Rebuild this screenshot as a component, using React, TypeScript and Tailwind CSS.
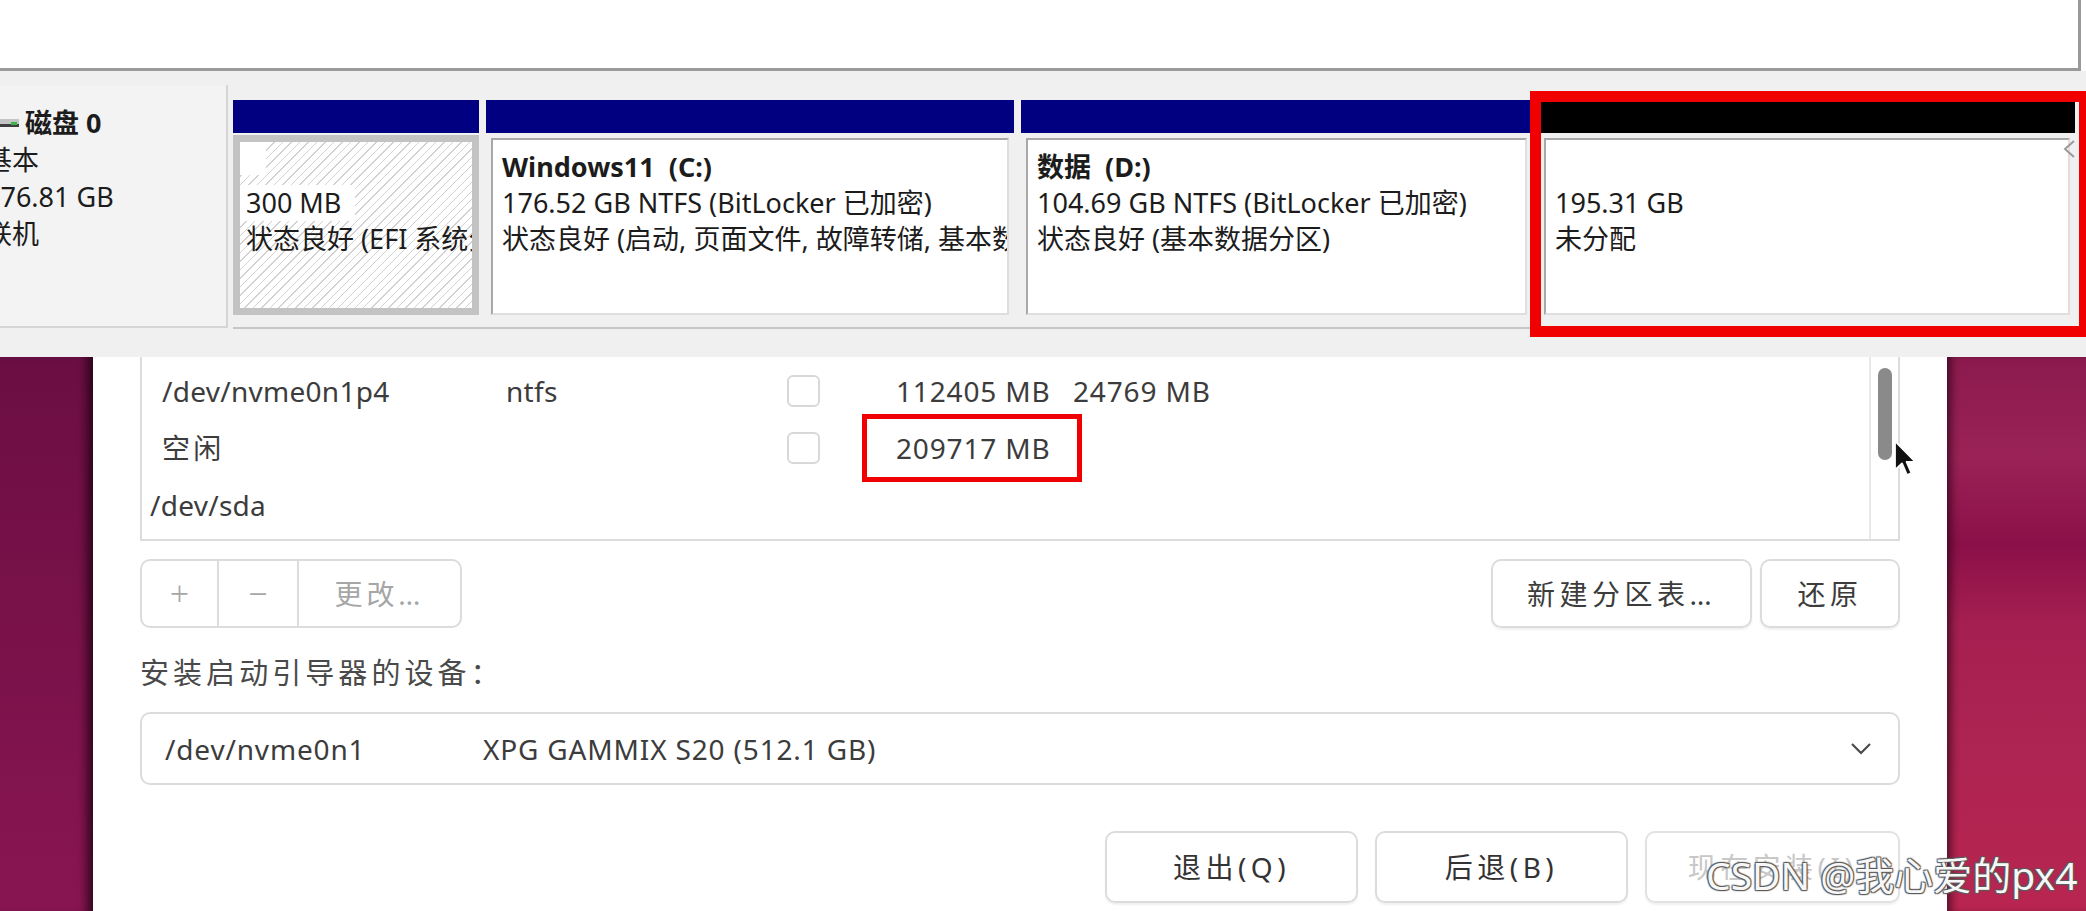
import React from 'react';

function DiskIcon() {
  return (
    <svg width="34" height="16" viewBox="0 0 34 16" className="shrink-0">
      <rect x="0" y="4" width="34" height="8" fill="#c4c4c4" />
      <rect x="0" y="9" width="34" height="3" fill="#3f3f3f" />
      <rect x="26" y="7" width="6" height="3" fill="#39b54a" />
    </svg>
  );
}

function PartitionBox({
  width,
  head,
  hatched,
  children,
}: {
  width: string;
  head: string;
  hatched?: boolean;
  children: React.ReactNode;
}) {
  return (
    <div className={`${width} flex flex-col`}>
      <div className={`h-[33px] ${head}`} />
      {hatched ? (
        <div className="mt-[2px] mb-[5px] flex-1 bg-[#c3c3c3] p-[7px]">
          <div className="h-full overflow-hidden whitespace-nowrap bg-[repeating-linear-gradient(135deg,#d2d2d2_0px,#d2d2d2_1px,#ffffff_1px,#ffffff_6px)]">
            {children}
          </div>
        </div>
      ) : (
        <div className="flex-1 p-[5px]">
          <div className="h-full overflow-hidden whitespace-nowrap border-2 border-t-[#a8a8a8] border-l-[#a8a8a8] border-r-[#dedede] border-b-[#dedede] bg-white pt-[9px] pl-[9px]">
            {children}
          </div>
        </div>
      )}
    </div>
  );
}

function DiskManagement() {
  return (
    <div className="relative h-[357px] overflow-hidden bg-[#f0f0f0] font-['Noto_Sans','Noto_Sans_CJK_SC',sans-serif] text-[27px] leading-[36px] text-[#1c1c1c]">
      <div className="h-[71px] bg-white">
        <div className="h-full w-[2081px] border-r-[3px] border-b-[3px] border-[#9a9a9a]" />
      </div>

      <div className="mt-[14px] flex items-start">
        {/* disk label */}
        <div className="h-[243px] w-[228px] overflow-hidden border-r-2 border-b-2 border-[#d5d5d5] bg-[#f3f3f3]">
          <div className="-ml-[15px] pt-[19px] leading-[37px] whitespace-nowrap">
            <div className="flex items-center gap-[6px] font-bold">
              <DiskIcon />
              <span>磁盘 0</span>
            </div>
            <div>基本</div>
            <div>176.81 GB</div>
            <div>联机</div>
          </div>
        </div>

        {/* partitions */}
        <div className="mt-[15px] ml-[5px] flex h-[229px] gap-[7px] border-b-2 border-[#c6c6c6] pb-[7px]">
          <PartitionBox width="w-[246px]" head="bg-[#000080]" hatched>
            <div className="h-[43px]">
              <span className="inline-block h-[33px] w-[26px] bg-white" />
            </div>
            <div>
              <span className="inline-block bg-white pr-[14px] pl-[6px]">300 MB</span>
            </div>
            <div className="pl-[6px]">状态良好 (EFI 系统分区)</div>
          </PartitionBox>

          <PartitionBox width="w-[528px]" head="bg-[#000080]">
            <div className="font-bold whitespace-pre">Windows11  (C:)</div>
            <div>176.52 GB NTFS (BitLocker 已加密)</div>
            <div>状态良好 (启动, 页面文件, 故障转储, 基本数据分区)</div>
          </PartitionBox>

          <PartitionBox width="w-[511px]" head="bg-[#000080]">
            <div className="font-bold whitespace-pre">数据  (D:)</div>
            <div>104.69 GB NTFS (BitLocker 已加密)</div>
            <div>状态良好 (基本数据分区)</div>
          </PartitionBox>

          <PartitionBox width="w-[536px]" head="bg-black">
            <div className="h-[36px]" />
            <div>195.31 GB</div>
            <div>未分配</div>
          </PartitionBox>
        </div>
      </div>

      {/* small chevron at right edge */}
      <svg className="absolute top-[140px] left-[2063px]" width="12" height="18" viewBox="0 0 12 18">
        <path d="M11 1 L2 9 L11 17" fill="none" stroke="#9a9a9a" strokeWidth="2" />
      </svg>

      {/* red annotation */}
      <div className="absolute top-[91px] left-[1530px] h-[246px] w-[560px] border-[11px] border-[#f00000]" />
    </div>
  );
}

function Checkbox() {
  return <div className="h-[32px] w-[33px] rounded-[6px] border-2 border-[#d8d8d8] bg-white" />;
}

const btn = 'flex items-center justify-center rounded-[10px] border-2 border-[#dcdcdc] tracking-[0.16em] shadow-[0_2px_2px_rgba(0,0,0,0.06)]';

function Installer() {
  return (
    <div className="relative w-[1854px] bg-white px-[47px] font-['Noto_Sans','Noto_Sans_CJK_SC',sans-serif] text-[28px] tracking-[0.01em] text-[#3c3c3c]">
      {/* partition list */}
      <div className="flex h-[184px] border-x-2 border-b-2 border-[#dcdcdc]">
        <div className="flex-1 pt-[5px]">
          <div className="flex h-[57px] items-center">
            <div className="w-[364px] pl-[20px]">/dev/nvme0n1p4</div>
            <div className="w-[281px]">ntfs</div>
            <div className="w-[109px]">
              <Checkbox />
            </div>
            <div className="w-[177px] tracking-[0.03em]">112405 MB</div>
            <div className="tracking-[0.03em]">24769 MB</div>
          </div>
          <div className="flex h-[57px] items-center">
            <div className="w-[364px] pl-[20px] tracking-[0.12em]">空闲</div>
            <div className="w-[281px]" />
            <div className="w-[109px]">
              <Checkbox />
            </div>
            <div className="-ml-[34px] flex h-[68px] items-center border-[5px] border-[#f00000] pr-[26px] pl-[29px] tracking-[0.03em]">
              209717 MB
            </div>
          </div>
          <div className="flex h-[57px] items-center pl-[8px]">/dev/sda</div>
        </div>
        <div className="w-[29px] border-l-2 border-[#e8e8e8]">
          <div className="mx-auto mt-[11px] h-[92px] w-[14px] rounded-full bg-[#8a8a8a]" />
        </div>
      </div>

      {/* buttons under list */}
      <div className="mt-[18px] flex h-[69px] justify-between">
        <div className="flex w-[322px] overflow-hidden rounded-[10px] border-2 border-[#dcdcdc] text-[#a6a6a6]">
          <div className="flex w-[77px] items-center justify-center border-r-2 border-[#dcdcdc] text-[34px] font-light">+</div>
          <div className="flex w-[80px] items-center justify-center border-r-2 border-[#dcdcdc] text-[34px] font-light">−</div>
          <div className="flex flex-1 items-center justify-center tracking-[0.14em]">更改…</div>
        </div>
        <div className="flex gap-[8px]">
          <div className={`${btn} w-[261px]`}>新建分区表…</div>
          <div className={`${btn} w-[140px]`}>还原</div>
        </div>
      </div>

      {/* boot loader device */}
      <div className="mt-[25px] h-[40px] text-[29px] leading-[40px] tracking-[0.14em] text-[#4a4a4a]">安装启动引导器的设备：</div>
      <div className="mt-[19px] flex h-[73px] items-center rounded-[10px] border-2 border-[#dcdcdc] pr-[26px] pl-[23px] tracking-[0.03em]">
        <div className="w-[318px]">/dev/nvme0n1</div>
        <div className="flex-1">XPG GAMMIX S20 (512.1 GB)</div>
        <svg width="22" height="13" viewBox="0 0 22 13">
          <path d="M2 2 L11 11 L20 2" fill="none" stroke="#4a4a4a" strokeWidth="2.2" />
        </svg>
      </div>

      {/* dialog buttons */}
      <div className="mt-[46px] flex justify-end gap-[17px]">
        <div className={`${btn} h-[72px] w-[253px] text-[#333333]`}>退出(Q)</div>
        <div className={`${btn} h-[72px] w-[253px] text-[#333333]`}>后退(B)</div>
        <div className={`${btn} h-[72px] w-[255px] border-[#e2e2e2] text-[#c8c8c8]`}>现在安装(I)</div>
      </div>
    </div>
  );
}

export default function App() {
  return (
    <div className="relative h-[911px] w-[2086px] overflow-hidden bg-white">
      <DiskManagement />
      <div className="flex h-[554px]">
        <div className="w-[93px] bg-[linear-gradient(180deg,#6b0e44_0%,#7a1249_50%,#881553_100%)] shadow-[inset_-12px_0_10px_-6px_rgba(20,0,10,0.7)]" />
        <Installer />
        <div className="flex-1 bg-[linear-gradient(180deg,#8c1a4e_0%,#9a2256_18%,#8b1049_34%,#a51f50_48%,#ad2452_70%,#b92551_100%)] shadow-[inset_8px_0_8px_-4px_rgba(20,0,10,0.6)]" />
      </div>

      {/* mouse pointer */}
      <svg className="absolute top-[439px] left-[1893px]" width="24" height="40" viewBox="0 0 12 20">
        <path d="M1 1 L1 15.5 L4.5 12.2 L7 18 L9.2 17 L6.8 11.4 L11.2 11.4 Z" fill="#111111" stroke="#ffffff" strokeWidth="0.9" strokeLinejoin="round" />
      </svg>

      {/* watermark */}
      <div className="absolute top-[851px] left-[1706px] font-['Noto_Sans','Noto_Sans_CJK_SC',sans-serif] text-[39px] leading-[48px] whitespace-nowrap text-[#f7f7f7] [text-shadow:1px_1px_1px_#5a5a5a,-1px_-1px_1px_#5a5a5a,1px_-1px_1px_#5a5a5a,-1px_1px_1px_#5a5a5a]">
        CSDN @我心爱的px4
      </div>
    </div>
  );
}
